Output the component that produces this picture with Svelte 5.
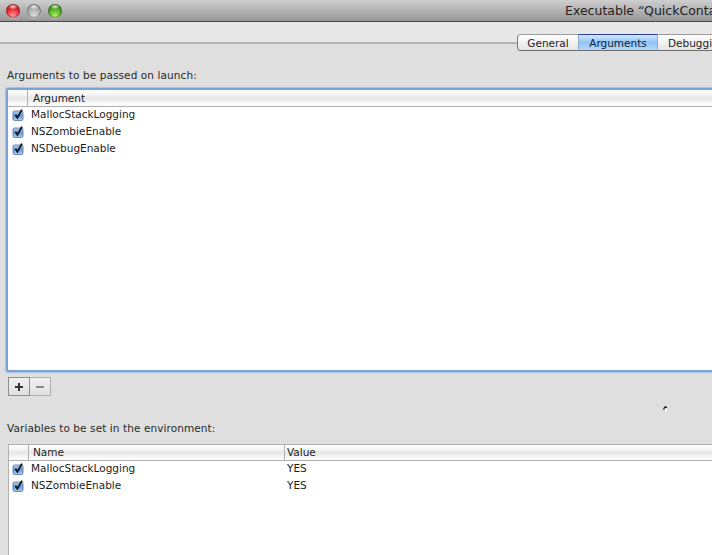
<script lang="ts">
  const args = ["MallocStackLogging", "NSZombieEnable", "NSDebugEnable"];
  const envs = [
    { name: "MallocStackLogging", value: "YES" },
    { name: "NSZombieEnable", value: "YES" },
  ];
</script>

{#snippet check()}
  <svg class="check" width="13" height="15" viewBox="0 0 13 15">
    <defs>
      <linearGradient id="cb" x1="0" y1="0" x2="0" y2="1">
        <stop offset="0" stop-color="#b4cff0" />
        <stop offset="0.5" stop-color="#5d9ae2" />
        <stop offset="1" stop-color="#a8d0f5" />
      </linearGradient>
    </defs>
    <rect x="1" y="4" width="10" height="9.5" rx="1.5" fill="url(#cb)" stroke="#5f7290" stroke-width="0.8" />
    <path d="M3.4 7.8 L5.4 10.8 L10 2.6" fill="none" stroke="#10141c" stroke-width="1.8" />
  </svg>
{/snippet}

<div class="window">
  <header class="titlebar">
    <div class="lights">
      <span class="light red"></span>
      <span class="light grey"></span>
      <span class="light green"></span>
    </div>
    <div class="title">Executable “QuickContacts” Info</div>
  </header>

  <div class="toolbar">
    <div class="tabs">
      <div class="tab first">General</div>
      <div class="tab active">Arguments</div>
      <div class="tab last">Debugging</div>
    </div>
  </div>

  <main class="content">
    <div class="label args-label">Arguments to be passed on launch:</div>
    <div class="table focused">
      <div class="thead">
        <div class="th check-col"></div>
        <div class="th arg-head">Argument</div>
      </div>
      <div class="tbody">
        {#each args as a}
          <div class="row">
            <div class="check-col">{@render check()}</div>
            <div class="cell">{a}</div>
          </div>
        {/each}
      </div>
    </div>

    <div class="buttons">
      <div class="btn plus">
        <svg width="10" height="10" viewBox="0 0 10 10"><path d="M5 1v8M1 5h8" stroke="#333" stroke-width="2" /></svg>
      </div>
      <div class="btn minus">
        <svg width="10" height="10" viewBox="0 0 10 10"><path d="M1 5h8" stroke="#8c8c8c" stroke-width="2" /></svg>
      </div>
    </div>

    <div class="label env-label">
      Variables to be set in the environment:
      <svg class="cursor" width="7" height="7" viewBox="0 0 7 7"><path d="M1 4 Q2 1 4 1 L5 2 L5 3 L3 3 L2 5 Z" fill="#222" /><rect x="3" y="4" width="2" height="2" fill="#fff" /></svg>
    </div>
    <div class="table env">
      <div class="thead">
        <div class="th check-col"></div>
        <div class="th name-col">Name</div>
        <div class="th value-head">Value</div>
      </div>
      <div class="tbody">
        {#each envs as e}
          <div class="row">
            <div class="check-col">{@render check()}</div>
            <div class="cell name-col">{e.name}</div>
            <div class="cell value">{e.value}</div>
          </div>
        {/each}
      </div>
    </div>
  </main>
</div>

<style>
  :global(body) {
    margin: 0;
    overflow: hidden;
  }

  .window {
    width: 712px;
    height: 555px;
    overflow: hidden;
    display: flex;
    flex-direction: column;
    background: #dfdfdf;
    font-family: "DejaVu Sans", sans-serif;
    font-size: 10.5px;
    color: #1c1c1c;
  }

  .titlebar {
    height: 21px;
    flex: none;
    display: flex;
    align-items: center;
    background: linear-gradient(#cfcfcf, #969696);
    border-bottom: 1px solid #4a4a4a;
    white-space: nowrap;
  }

  .lights {
    display: flex;
    gap: 7px;
    padding-left: 6px;
    width: 559px;
    flex: none;
    box-sizing: border-box;
  }

  .light {
    width: 14px;
    height: 14px;
    border-radius: 50%;
    box-shadow: inset 0 0 0 1px rgba(0, 0, 0, 0.35), 0 1px 0 rgba(255, 255, 255, 0.3);
  }

  .red {
    background: radial-gradient(ellipse 5px 3px at 50% 18%, #ffd6d8 0, transparent 100%),
      radial-gradient(circle at 50% 85%, #ff9aa0 0, #e8222c 55%, #8c1014 100%);
  }

  .grey {
    background: radial-gradient(ellipse 5px 3px at 50% 18%, #ececec 0, transparent 100%),
      radial-gradient(circle at 50% 85%, #dcdcdc 0, #a9a9a9 60%, #808080 100%);
  }

  .green {
    background: radial-gradient(ellipse 5px 3px at 50% 18%, #dcf8c4 0, transparent 100%),
      radial-gradient(circle at 50% 85%, #b4f070 0, #4aa61e 55%, #25610d 100%);
  }

  .title {
    font-size: 12.5px;
    color: #222;
    padding-left: 6px;
  }

  .toolbar {
    height: 20px;
    flex: none;
    background: #e8e8e8;
    border-bottom: 2px solid #b4b4b4;
    position: relative;
  }

  .tabs {
    position: absolute;
    left: 517px;
    top: 12px;
    display: flex;
    height: 17px;
    white-space: nowrap;
  }

  .tab {
    width: 80px;
    box-sizing: border-box;
    text-align: center;
    line-height: 16px;
    background: linear-gradient(#ffffff, #f0f0f0 55%, #e4e4e4);
    border-top: 1px solid #9a9a9a;
    border-bottom: 1px solid #6e6e6e;
  }

  .tab.first {
    width: 61px;
    border-left: 1px solid #7a7a7a;
    border-radius: 4px 0 0 4px;
  }

  .tab.last {
    text-align: left;
    padding-left: 10px;
  }

  .tab.active {
    background: linear-gradient(#d4e8fb, #8fc4f5 50%, #b5dafa);
    border-top-color: #2a3f9c;
    border-left: 1px solid #8fa9c8;
    border-right: 1px solid #8fa9c8;
    color: #14233a;
  }

  .content {
    flex: 1;
    min-height: 0;
    padding: 0 0 0 6px;
    display: flex;
    flex-direction: column;
  }

  .label {
    line-height: 14px;
    padding-left: 1px;
    letter-spacing: 0.09px;
    color: #2a2a2a;
  }

  .args-label {
    margin-top: 24px;
    margin-bottom: 6px;
  }

  .env-label {
    margin-top: 25px;
    margin-bottom: 9px;
    position: relative;
  }

  .cursor {
    position: absolute;
    left: 656px;
    top: -16px;
  }

  .table {
    background: #fff;
    margin-right: -4px;
    box-sizing: border-box;
  }

  .table.focused {
    height: 284px;
    border: 2px solid #7ba2d2;
    border-radius: 2px;
    box-shadow: 0 0 1px 1px #a9c3e2;
    flex: none;
  }

  .table.env {
    flex: 1;
    margin-left: 2px;
    border-top: 1px solid #b0b0b0;
    border-left: 1px solid #b0b0b0;
  }

  .thead {
    height: 16px;
    display: flex;
    border-bottom: 1px solid #b0b0b0;
    background: linear-gradient(#ffffff, #f4f4f4 30%, #e6e6e6 50%, #f6f6f6 80%, #fdfdfd);
  }

  .env .thead {
    height: 15px;
  }

  .th {
    line-height: 16px;
    padding-left: 4px;
    box-sizing: border-box;
  }

  .env .th {
    line-height: 15px;
  }

  .th.check-col {
    padding: 0;
    width: 20px;
    border-right: 1px solid #b0b0b0;
  }

  .th.arg-head {
    padding-left: 5px;
  }

  .th.name-col {
    width: 256px;
    border-right: 1px solid #b0b0b0;
  }

  .th.value-head {
    padding-left: 2px;
  }

  .check-col {
    width: 20px;
    flex: none;
  }

  .row {
    display: flex;
    height: 17px;
    line-height: 15px;
  }

  .row .check-col {
    padding-left: 4px;
    box-sizing: border-box;
  }

  .env .row .check-col {
    width: 19px;
    padding-left: 3px;
  }

  .check {
    display: block;
  }

  .cell {
    padding-left: 3px;
  }

  .cell.name-col {
    width: 255px;
    box-sizing: border-box;
  }

  .cell.value {
    padding-left: 4px;
  }

  .buttons {
    display: flex;
    margin: 5px 0 0 2px;
    height: 19px;
  }

  .btn {
    width: 22px;
    height: 19px;
    box-sizing: border-box;
    display: flex;
    align-items: center;
    justify-content: center;
    border: 1px solid #aeaeae;
    background: linear-gradient(#f0f0f0, #e0e0e0);
  }

  .btn.plus {
    border-color: #8e8e8e;
  }

  .btn.minus {
    width: 21px;
    border-left: none;
  }
</style>
